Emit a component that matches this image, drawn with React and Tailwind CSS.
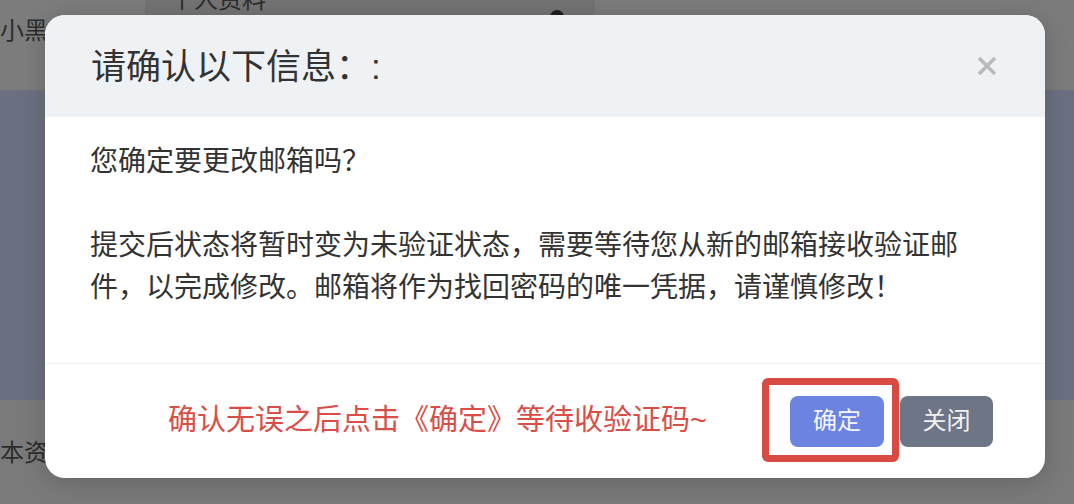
import { useState } from "react";

const FONT = { fontFamily: '"Liberation Sans", "Noto Sans CJK SC", sans-serif' };

const CloseIcon = () => (
  <svg width="20" height="20" viewBox="0 0 20 20" fill="none">
    <path d="M2 2 L18 18 M18 2 L2 18" stroke="#b8bbbe" strokeWidth="3.6" strokeLinecap="butt" />
  </svg>
);

const BackgroundPage = () => (
  <div className="flex h-full w-full flex-col">
    <div className="flex h-[90px]">
      <div className="w-[145px] bg-[#7c7c7c] pt-[16px] text-[24px] leading-[30px] text-[#2c2c2c]">
        小黑屋
      </div>
      <div className="relative w-[450px] bg-[#737373]">
        <span className="absolute left-[25px] top-[-18px] text-[24px] text-[#2c2c2c]">个人资料</span>
        <span className="absolute left-[405px] top-[10px] h-[14px] w-[14px] rounded-full bg-[#1e1e1e]" />
      </div>
      <div className="flex-1 bg-[#7b7b7b]" />
    </div>
    <div className="h-[310px] bg-[#6b7080]" />
    <div className="flex-1 bg-[#7a7a7a] pt-[38px] text-[24px] leading-[30px] text-[#2c2c2c]">
      <span className="-ml-[24px]">基本资料</span>
    </div>
  </div>
);

export default function App() {
  const [open, setOpen] = useState(true);

  return (
    <div className="relative h-[504px] w-[1074px] overflow-hidden bg-[#7a7a7a]" style={FONT}>
      <BackgroundPage />

      {open && (
        <div className="absolute left-[45px] top-[15px] w-[1000px] overflow-hidden rounded-[20px] bg-white shadow-[0_4px_24px_rgba(0,0,0,0.18)]">
          <div className="flex h-[102px] items-center justify-between bg-[#eef2f5] pl-[46px] pr-[48px]">
            <h2 className="text-[35px] font-normal leading-none text-[#333333]">请确认以下信息：:</h2>
            <button className="flex items-center justify-center" onClick={() => setOpen(false)}>
              <CloseIcon />
            </button>
          </div>

          <div className="pb-[54px] pl-[45px] pr-[60px] pt-[24px] text-[28px] leading-[42px] text-[#333333]">
            <p>您确定要更改邮箱吗？</p>
            <br />
            <p>
              提交后状态将暂时变为未验证状态，需要等待您从新的邮箱接收验证邮件，以完成修改。邮箱将作为找回密码的唯一凭据，请谨慎修改！
            </p>
          </div>

          <div className="flex h-[115px] items-center justify-end border-t border-[#eef2f5] pr-[52px]">
            <span className="mr-[83px] text-[29px] text-[#d94e48]">确认无误之后点击《确定》等待收验证码~</span>
            <div className="relative">
              <button className="h-[51px] w-[94px] rounded-[8px] bg-[#6c83e2] text-[24px] text-[#f4f6ff]">
                确定
              </button>
              <span className="pointer-events-none absolute left-[-28px] top-[-18px] h-[84px] w-[137px] rounded-[6px] border-[7px] border-[#d94a44]" />
            </div>
            <button
              className="ml-[16px] h-[51px] w-[93px] rounded-[8px] bg-[#6e7587] text-[24px] text-[#f1f1f1]"
              onClick={() => setOpen(false)}
            >
              关闭
            </button>
          </div>
        </div>
      )}
    </div>
  );
}
